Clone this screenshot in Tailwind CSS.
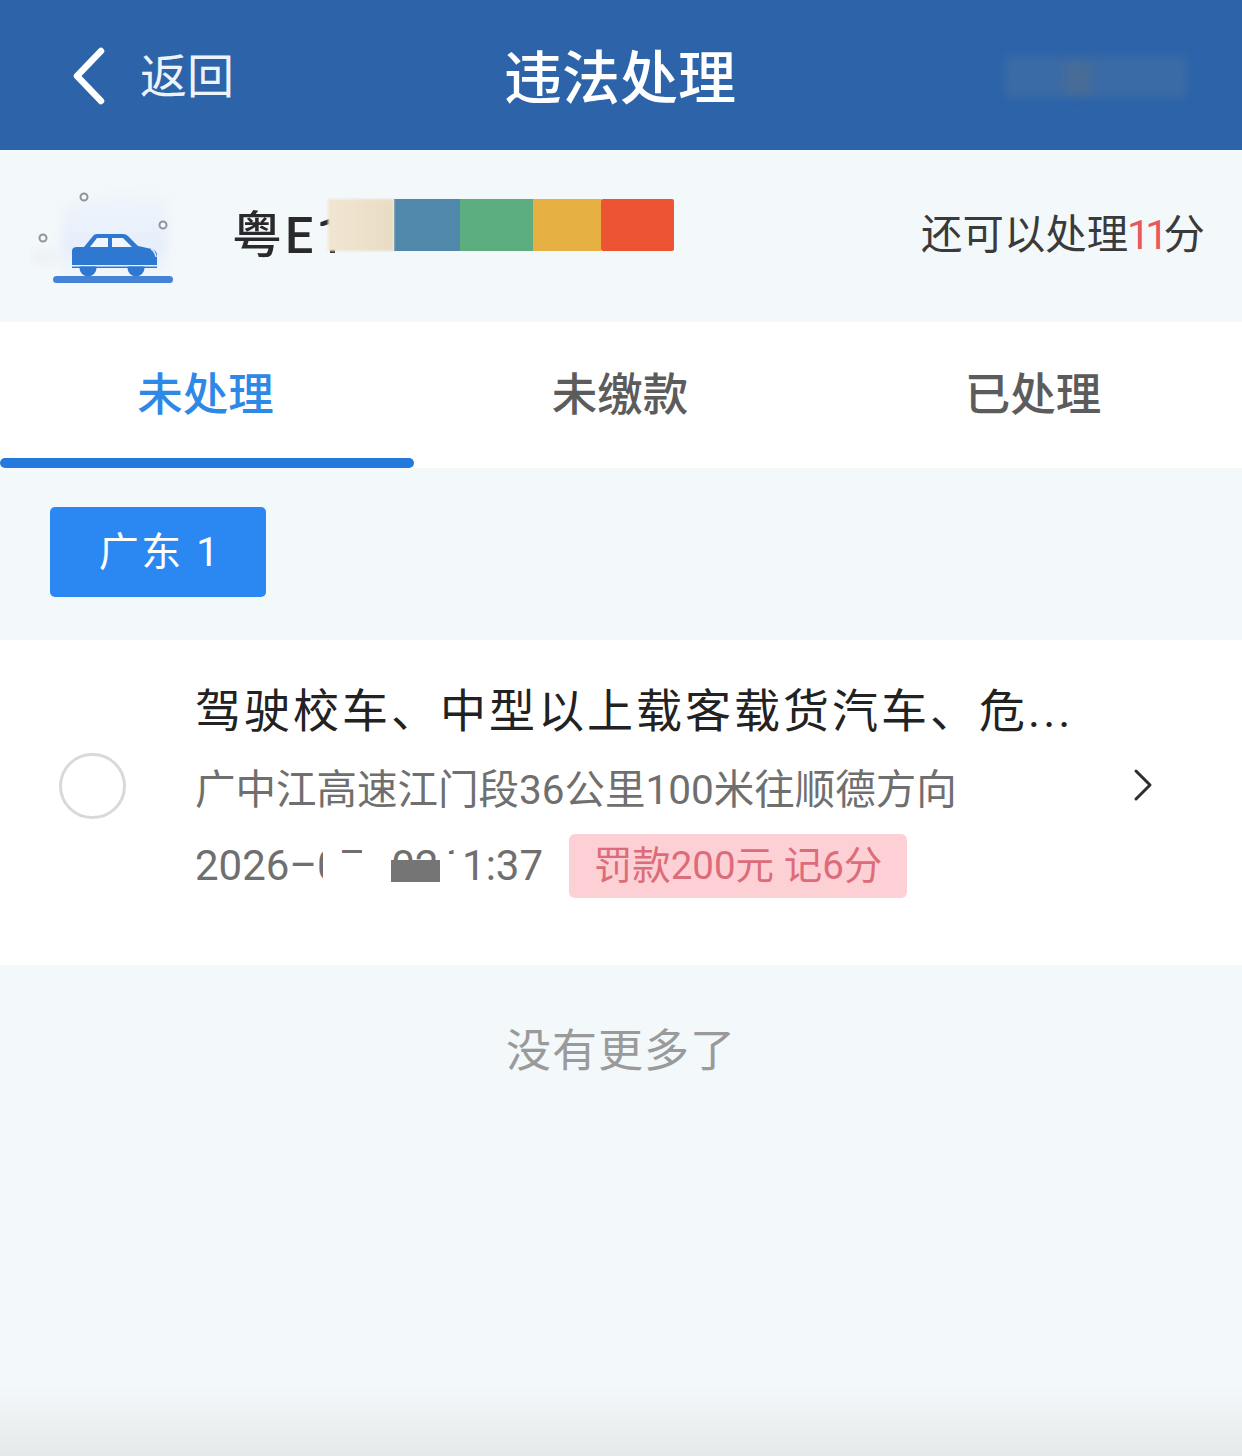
<!DOCTYPE html>
<html lang="zh-CN">
<head>
  <meta charset="UTF-8" />
  <meta name="viewport" content="width=device-width, initial-scale=1.0" />
  <title>违法处理</title>
  <script src="https://cdn.jsdelivr.net/npm/@tailwindcss/browser@4"></script>
</head>
<body class="bg-[#f3f8fa] font-['Roboto','Noto_Sans_CJK_SC',sans-serif]">
<div class="relative w-[1242px] h-[1456px] overflow-hidden flex flex-col">

  <!-- header -->
  <header class="h-[150px] shrink-0 bg-[#2c63a9] text-white flex items-center relative">
    <div class="flex items-center pl-[71px] gap-[31px] w-[400px] pt-[2px]">
      <svg width="38" height="58" viewBox="0 0 38 58" fill="none"><path d="M30 4 L6 29 L30 54" stroke="#fff" stroke-width="6.5" stroke-linecap="round" stroke-linejoin="round"/></svg>
      <span class="text-[47px] leading-none text-[#eef3fa]">返回</span>
    </div>
    <h1 class="absolute left-0 right-0 top-[50px] pr-[2px] text-center text-[58px] leading-none font-medium">违法处理</h1>
    <!-- blurred out -->
    <div class="absolute left-[1005px] top-[56px] w-[182px] h-[42px] bg-[#5a7aa0]/35 blur-[5px] rounded"></div>
    <div class="absolute left-[1065px] top-[62px] w-[26px] h-[32px] bg-[#5d6f80]/40 blur-[5px]"></div>
  </header>

  <!-- plate row -->
  <section class="h-[172px] shrink-0 flex items-center relative">
    <svg class="ml-[30px] shrink-0" width="150" height="110" viewBox="30 30 150 110" fill="none">
      <defs>
        <linearGradient id="blob" x1="0" y1="0" x2="0" y2="1">
          <stop offset="0" stop-color="#eaf1fb" stop-opacity="0.5"/>
          <stop offset="0.65" stop-color="#e6eefb"/>
          <stop offset="1" stop-color="#e6eefb" stop-opacity="0.2"/>
        </linearGradient>
        <filter id="soft" x="-15%" y="-15%" width="130%" height="130%"><feGaussianBlur stdDeviation="5"/></filter>
      </defs>
      <path d="M62 62 C70 46 105 40 166 46 L170 72 L166 124 L60 124 Z" fill="url(#blob)" filter="url(#soft)"/>
      <ellipse cx="46" cy="106" rx="14" ry="9" fill="#eef1f5" filter="url(#soft)"/>
      <circle cx="84" cy="46" r="3.5" stroke="#8f959e" stroke-width="2" fill="#f3f8fa"/>
      <circle cx="163" cy="74" r="3.5" stroke="#8f959e" stroke-width="2" fill="#f3f8fa"/>
      <circle cx="43" cy="87" r="3.5" stroke="#8f959e" stroke-width="2" fill="#f3f8fa"/>
      <circle cx="88" cy="117" r="8.5" fill="#2f78d2"/>
      <circle cx="136" cy="117" r="8.5" fill="#2f78d2"/>
      <rect x="53" y="125" width="120" height="7" rx="3.5" fill="#4483d6"/>
      <path d="M72 114 V100 Q72 96 77 96 H84 L93 85 Q94 83 97 83 H123 Q126 83 128 85 L138 95 L152 98 Q157 100 157 104 V114 Z" fill="#2f78d2"/>
      <rect x="72" y="114" width="85" height="1.5" fill="#e7effa"/>
      <rect x="72" y="115.5" width="85" height="1.5" fill="#2f78d2"/>
      <path d="M90 96 L97 87 H108 V96 Z M112 87 H123 L132 96 H112 Z" fill="#f0f6fd"/>
      <path d="M151 98 Q155 100 156 106" stroke="#dfe9f7" stroke-width="1.5"/>
    </svg>
    <div class="relative ml-[52px] text-[50px] leading-none font-medium text-[#2a2a2a] w-[440px] tracking-[3px]">
      <span>粤E1</span>
      <div class="absolute left-[86px] top-[15px] w-[12px] h-[30px] bg-[#f3f8fa]"></div>
      <div class="absolute left-[96px] top-[-12px] flex h-[52px]">
        <div class="w-[66px] bg-gradient-to-r from-[#f1e6d3] to-[#e9dcc4] blur-[1px]"></div>
        <div class="w-[66px] bg-[#4f88ab]"></div>
        <div class="w-[73px] bg-[#5cae80]"></div>
        <div class="w-[68px] bg-[#e6b042]"></div>
        <div class="w-[73px] bg-[#ec5433] rounded-[2px]"></div>
      </div>
    </div>
    <div class="absolute right-[37px] top-[65px] text-[41.4px] leading-none text-[#3a3a3a]">还可以处理<span class="text-[#e8585c] tracking-[-5px] ml-[-1px]">11</span>分</div>
  </section>

  <!-- tabs -->
  <nav class="h-[146px] shrink-0 bg-white grid grid-cols-3 text-[45.5px] font-medium text-[#5c5c5c] relative">
    <div class="flex justify-center pt-[51px] leading-none text-[#2e88e6] relative">
      <span class="mr-[3px]">未处理</span>
      <div class="absolute left-0 right-0 bottom-0 h-[10px] bg-[#2479dc] rounded-full"></div>
    </div>
    <div class="flex justify-center pt-[51px] pr-[2px] leading-none">未缴款</div>
    <div class="flex justify-center pt-[51px] pr-[4px] leading-none">已处理</div>
  </nav>

  <!-- province filter -->
  <div class="h-[172px] shrink-0 pl-[50px] pt-[39px]">
    <button class="w-[216px] h-[90px] bg-[#2b88f3] rounded-[5px] text-white text-[40px] tracking-[2.5px] leading-none pt-[2px] pl-[4px]">广东 1</button>
  </div>

  <!-- violation -->
  <article class="h-[325px] shrink-0 bg-white flex relative">
    <div class="w-[195px] shrink-0 pl-[59px] pt-[113px]">
      <div class="w-[67px] h-[66px] rounded-full border-[3px] border-[#d9d9d9]"></div>
    </div>
    <div class="w-[890px] pt-[43px]">
      <div class="text-[46px] leading-[56px] text-[#222] tracking-[3px] whitespace-nowrap">驾驶校车、中型以上载客载货汽车、危...</div>
      <div class="mt-[26px] text-[40.5px] leading-[50px] text-[#6f6f6f] whitespace-nowrap">广中江高速江门段36公里100米往顺德方向</div>
      <div class="mt-[19px] flex items-center relative h-[64px]">
        <!-- date is partly masked in the source -->
        <span class="relative w-[374px] h-[64px] text-[42px] leading-[64px] text-[#6f6f6f] whitespace-nowrap">
          <span class="flex">
            <span>2026–07</span><span class="ml-[27px]">02</span><span>11:37</span>
          </span>
          <span class="absolute left-[130px] top-[19px] w-[66px] h-[45px] bg-white"></span>
          <span class="absolute left-[128px] top-0 w-[14px] h-[64px] bg-white"></span>
          <span class="absolute left-[167px] top-0 w-[28px] h-[64px] bg-white"></span>
          <span class="absolute left-[196px] top-[26px] w-[50px] h-[22px] bg-[#757575]"></span>
          <span class="absolute left-[245px] top-[20px] w-[22px] h-[44px] bg-white"></span>
          <span class="absolute left-[245px] top-0 w-[9px] h-[64px] bg-white"></span>
        </span>
        <span class="w-[338px] h-[64px] rounded-[6px] bg-[#fdd0d5] text-[#dc6c7a] text-[38.5px] flex items-center justify-center leading-none whitespace-nowrap">罚款200元 记6分</span>
      </div>
    </div>
    <svg class="absolute left-[1132px] top-[128px]" width="22" height="34" viewBox="0 0 22 34" fill="none"><path d="M4 3 L18 17 L4 31" stroke="#2e2e2e" stroke-width="3" stroke-linecap="round" stroke-linejoin="round"/></svg>
  </article>

  <p class="mt-[61px] text-center text-[45px] leading-[52px] text-[#9a9a9a] tracking-[1px]">没有更多了</p>

  <div class="absolute left-0 right-0 bottom-0 h-[70px] bg-gradient-to-b from-transparent to-[#e6e9ea]"></div>
</div>
</body>
</html>
